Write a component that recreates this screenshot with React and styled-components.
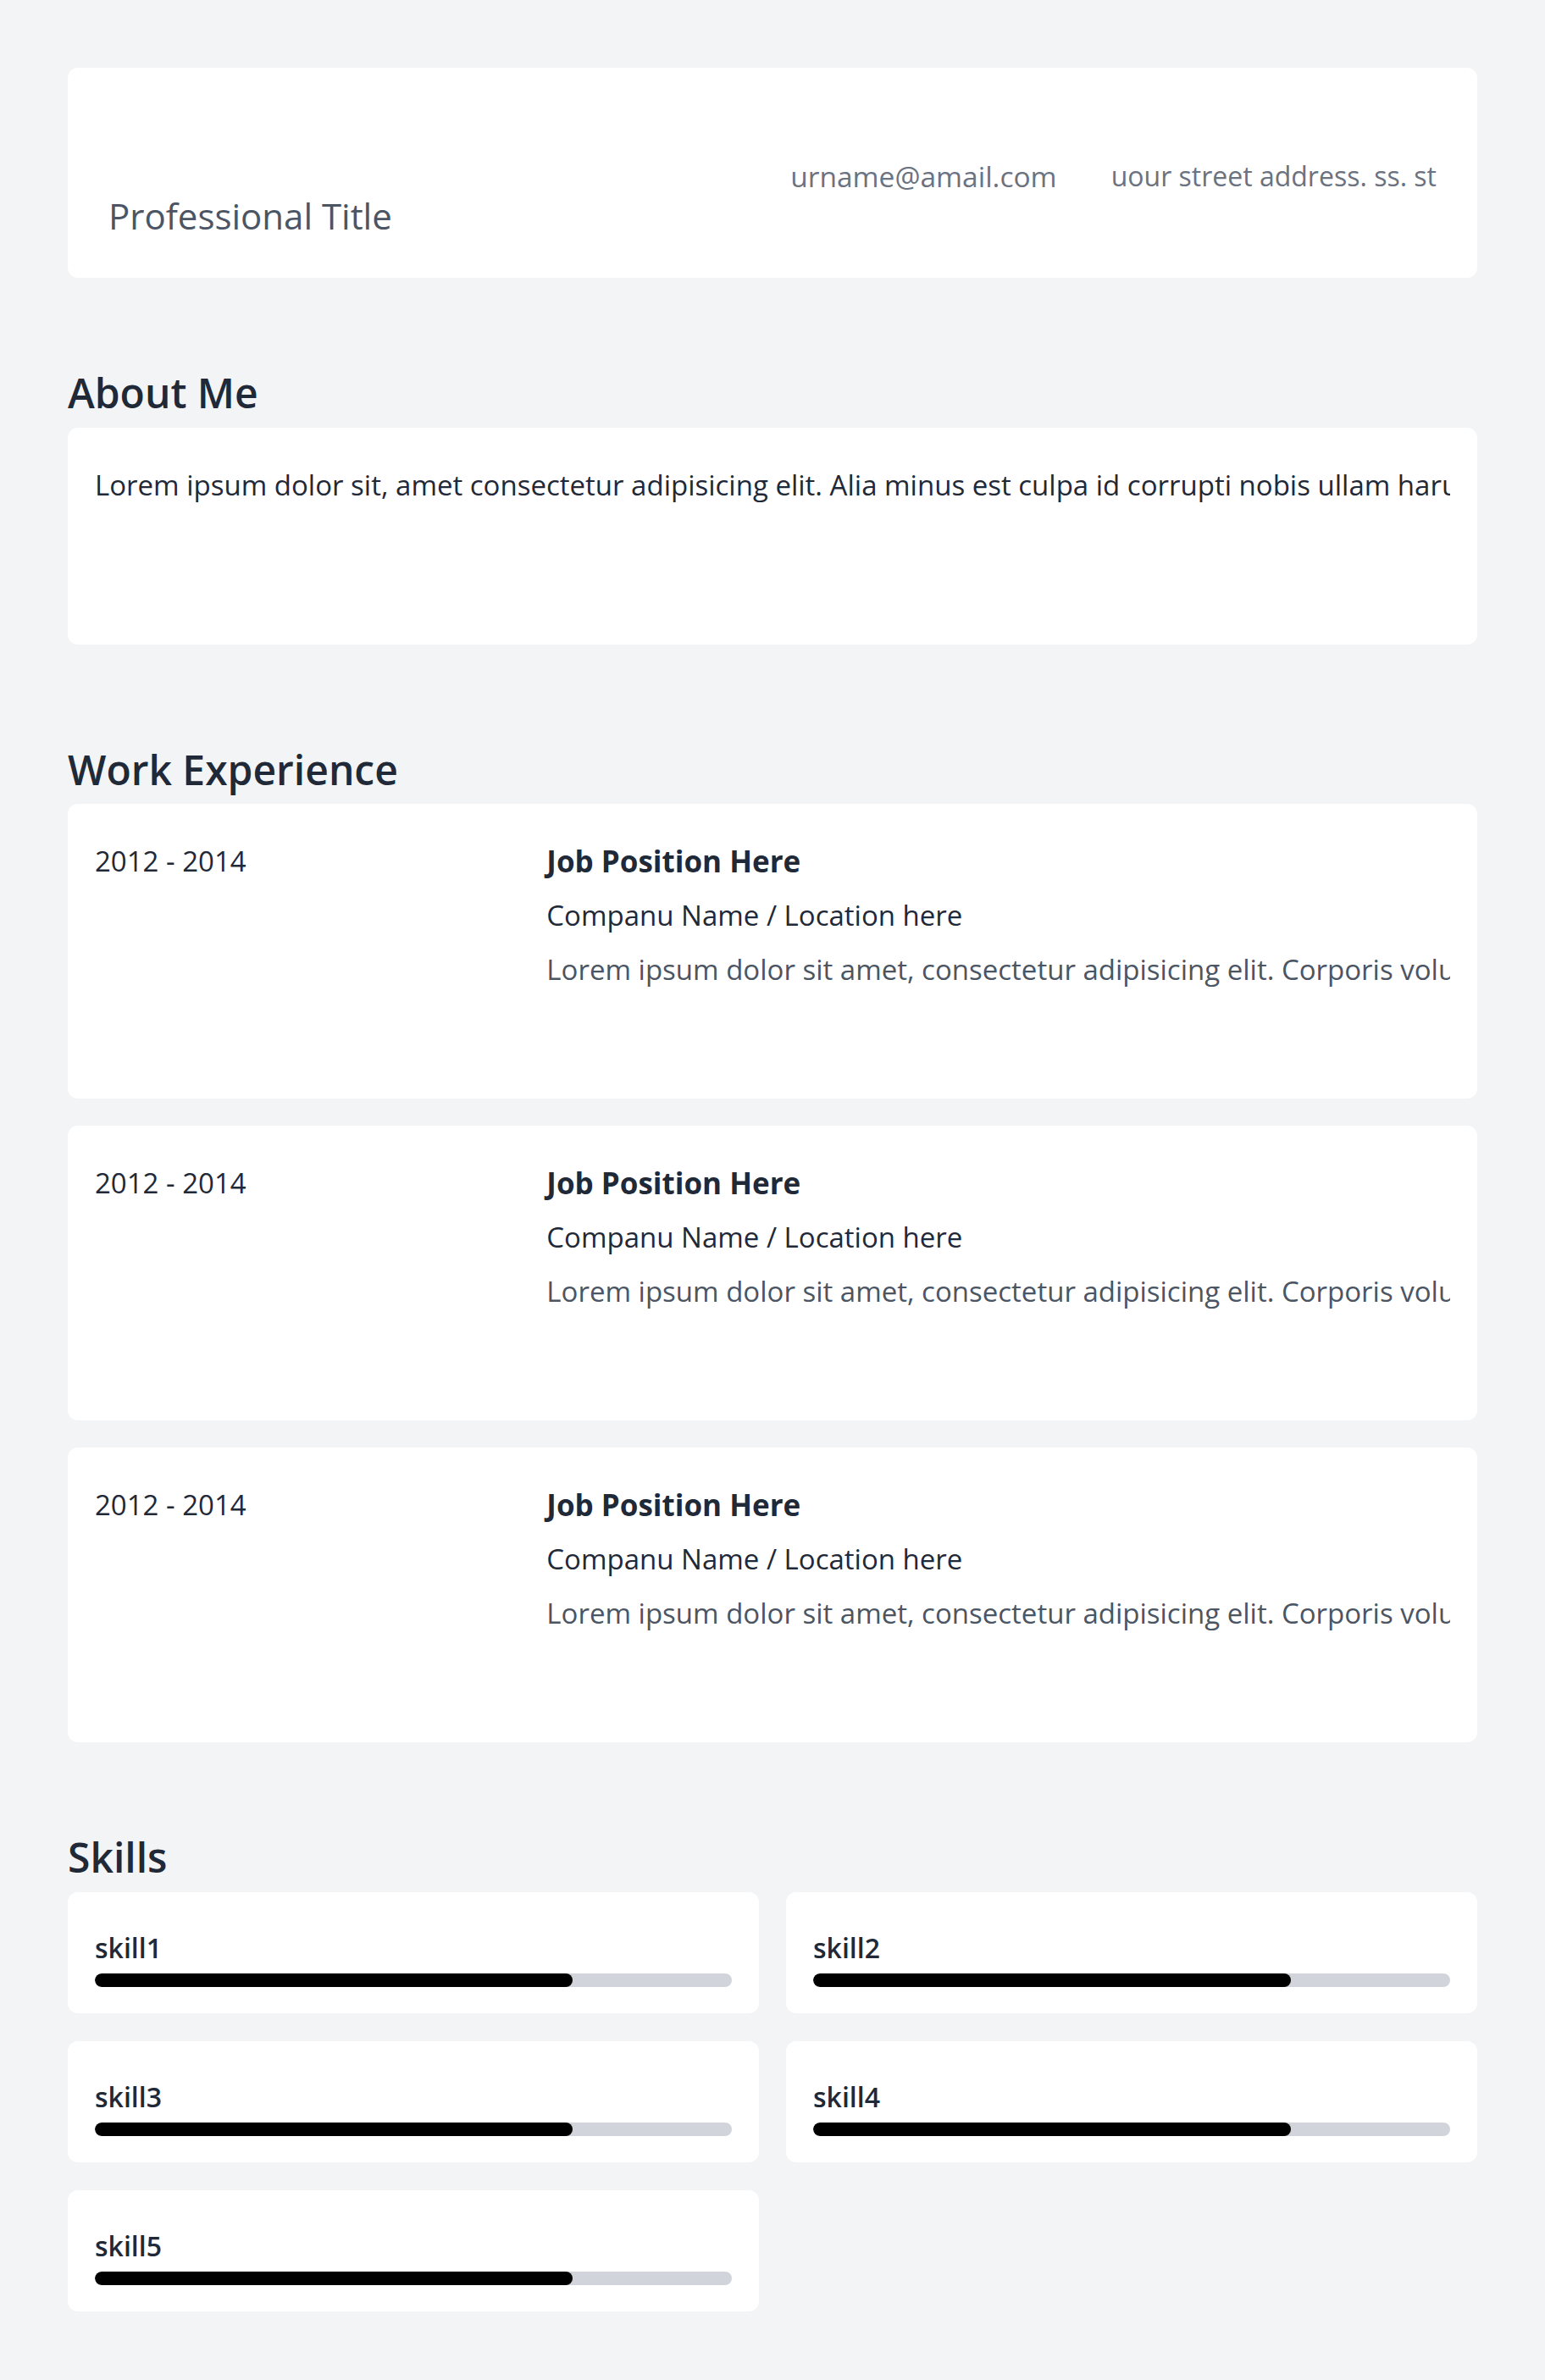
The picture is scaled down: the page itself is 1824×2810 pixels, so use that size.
import React from "react";
import styled, { createGlobalStyle } from "styled-components";

const GlobalStyle = createGlobalStyle`
  * { box-sizing: border-box; }
  html, body { margin: 0; padding: 0; }
  body {
    background: #f3f4f6;
    font-family: "Open Sans", "Noto Sans", sans-serif;
    color: #1f2937;
  }
`;

const Page = styled.main`
  padding: 80px 80px 81px;
  display: flex;
  flex-direction: column;
  gap: 107px;
`;

const Card = styled.div`
  background: #ffffff;
  border-radius: 12px;
`;

const Header = styled(Card)`
  min-height: 248px;
  padding: 48px;
  display: flex;
  justify-content: space-between;
  align-items: center;
`;

const HeaderLeft = styled.div`
  align-self: flex-end;
  display: flex;
  flex-direction: column;
`;

const ProTitle = styled.h2`
  margin: 0;
  font-size: 42px;
  line-height: 50px;
  font-weight: 400;
  color: #4b5563;
`;

const Contacts = styled.div`
  display: flex;
  gap: 64px;
  padding-top: 7px;
`;

const ContactItem = styled.span`
  font-size: ${(p) => p.$size || 32}px;
  line-height: 64px;
  color: #6b7280;
`;

const Section = styled.section`
  display: flex;
  flex-direction: column;
  margin-bottom: ${(p) => (p.$extra ? `${p.$extra}px` : "0")};
`;

const SectionTitle = styled.h2`
  margin: 0 0 12px;
  font-size: 48px;
  line-height: 1.2;
  font-weight: 600;
  color: #1f2937;
`;

const AboutCard = styled(Card)`
  min-height: 256px;
  padding: 36px 32px 32px;
`;

const ClipLine = styled.p`
  margin: 0;
  font-size: 33px;
  line-height: 64px;
  white-space: nowrap;
  overflow: hidden;
  color: ${(p) => p.$color || "#1f2937"};
`;

const JobList = styled.div`
  display: flex;
  flex-direction: column;
  gap: 32px;
`;

const JobCard = styled(Card)`
  min-height: 348px;
  padding: 36px 32px 32px;
  display: grid;
  grid-template-columns: 1fr 2fr;
  align-items: start;
`;

const JobDate = styled.div`
  font-size: 33px;
  line-height: 64px;
  color: #1f2937;
`;

const JobBody = styled.div`
  display: flex;
  flex-direction: column;
  min-width: 0;
`;

const JobTitle = styled.h3`
  margin: 0;
  font-size: 35px;
  line-height: 64px;
  font-weight: 700;
  color: #1f2937;
`;

const Company = styled.div`
  font-size: 33px;
  line-height: 64px;
  color: #1f2937;
`;

const SkillGrid = styled.div`
  display: grid;
  grid-template-columns: 1fr 1fr;
  gap: 33px 32px;
`;

const SkillCard = styled(Card)`
  padding: 36px 32px 31px;
  display: flex;
  flex-direction: column;
`;

const SkillName = styled.div`
  font-size: 32px;
  line-height: 60px;
  font-weight: 600;
  color: #1f2937;
`;

const Track = styled.div`
  height: 16px;
  border-radius: 9999px;
  background: #d1d5db;
  overflow: hidden;
`;

const Fill = styled.div`
  height: 100%;
  border-radius: 9999px;
  background: #000000;
`;

const jobs = [1, 2, 3].map((i) => ({
  id: i,
  date: "2012 - 2014",
  title: "Job Position Here",
  company: "Companu Name / Location here",
  desc:
    "Lorem ipsum dolor sit amet, consectetur adipisicing elit. Corporis voluptatum, quibusdam explicabo fugit tempora nihil eum sint?",
}));

const skills = [
  { name: "skill1", level: 75 },
  { name: "skill2", level: 75 },
  { name: "skill3", level: 75 },
  { name: "skill4", level: 75 },
  { name: "skill5", level: 75 },
];

export default function App() {
  return (
    <>
      <GlobalStyle />
      <Page>
        <Header>
          <HeaderLeft>
            <ProTitle>Professional Title</ProTitle>
          </HeaderLeft>
          <Contacts>
            <ContactItem $size={33.5}>urname@amail.com</ContactItem>
            <ContactItem>uour street address. ss. st</ContactItem>
          </Contacts>
        </Header>

        <Section $extra={12}>
          <SectionTitle>About Me</SectionTitle>
          <AboutCard>
            <ClipLine>
              Lorem ipsum dolor sit, amet consectetur adipisicing elit. Alia minus est culpa id corrupti nobis ullam harum
              veritatis quasi, aliquam eveniet.
            </ClipLine>
          </AboutCard>
        </Section>

        <Section>
          <SectionTitle>Work Experience</SectionTitle>
          <JobList>
            {jobs.map((j) => (
              <JobCard key={j.id}>
                <JobDate>{j.date}</JobDate>
                <JobBody>
                  <JobTitle>{j.title}</JobTitle>
                  <Company>{j.company}</Company>
                  <ClipLine $color="#4b5563">{j.desc}</ClipLine>
                </JobBody>
              </JobCard>
            ))}
          </JobList>
        </Section>

        <Section>
          <SectionTitle>Skills</SectionTitle>
          <SkillGrid>
            {skills.map((s) => (
              <SkillCard key={s.name}>
                <SkillName>{s.name}</SkillName>
                <Track>
                  <Fill style={{ width: `${s.level}%` }} />
                </Track>
              </SkillCard>
            ))}
          </SkillGrid>
        </Section>
      </Page>
    </>
  );
}
